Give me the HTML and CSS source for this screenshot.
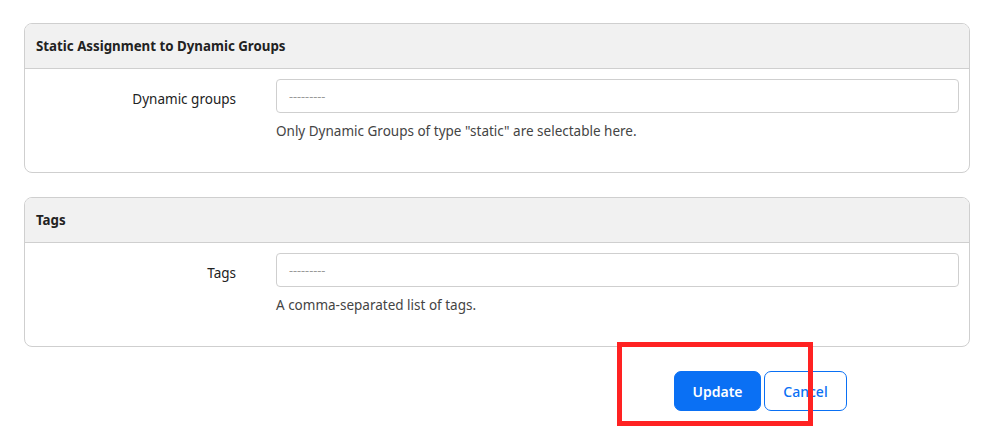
FILE: index.html
```html
<!DOCTYPE html>
<html>
<head>
<meta charset="utf-8">
<link rel="stylesheet" href="styles.css">
</head>
<body>
<div class="page">
  <section class="panel">
    <div class="panel-heading">Static Assignment to Dynamic Groups</div>
    <div class="panel-body">
      <label class="field-label">Dynamic groups</label>
      <div class="field">
        <div class="select"><span class="placeholder">---------</span></div>
        <div class="help">Only Dynamic Groups of type "static" are selectable here.</div>
      </div>
    </div>
  </section>
  <section class="panel">
    <div class="panel-heading">Tags</div>
    <div class="panel-body">
      <label class="field-label">Tags</label>
      <div class="field">
        <div class="select"><span class="placeholder">---------</span></div>
        <div class="help">A comma-separated list of tags.</div>
      </div>
    </div>
  </section>
  <div class="actions">
    <button class="btn btn-primary">Update</button>
    <button class="btn btn-outline">Cancel</button>
  </div>
  <div class="highlight"></div>
</div>
</body>
</html>
```
FILE: styles.css
```css
html, body {
  margin: 0;
  padding: 0;
  background: #fff;
}
body {
  font-family: "Noto Sans", "Open Sans", sans-serif;
  font-size: 13.5px;
  color: #222;
}
.page {
  position: relative;
  box-sizing: border-box;
  min-height: 100vh;
  padding: 23px 30px 0 24px;
}
.panel {
  border: 1px solid #cfcfcf;
  border-radius: 8px;
  margin-bottom: 24px;
  overflow: hidden;
}
.panel-heading {
  height: 45px;
  box-sizing: border-box;
  background: #f1f1f1;
  border-bottom: 1px solid #cfcfcf;
  padding: 0 11px;
  display: flex;
  align-items: center;
  font-size: 13.3px;
  font-weight: 700;
  color: #222;
}
.panel-body {
  display: grid;
  grid-template-columns: 211px 1fr;
  column-gap: 40px;
  padding: 10px 10px 31px 0;
}
.field-label {
  height: 34px;
  box-sizing: border-box;
  padding-top: 5px;
  display: flex;
  align-items: center;
  justify-content: flex-end;
  font-size: 13.5px;
  color: #222;
}
.select {
  height: 34px;
  box-sizing: border-box;
  border: 1px solid #cfcfcf;
  border-radius: 4px;
  display: flex;
  align-items: center;
  padding: 0 12px;
}
.placeholder {
  font-size: 12.5px;
  color: #9a9a9a;
}
.help {
  margin-top: 8px;
  line-height: 20px;
  color: #444;
}
.actions {
  display: flex;
  gap: 3px;
  padding-left: 650px;
}
.btn {
  height: 40px;
  box-sizing: border-box;
  border-radius: 7px;
  font-family: inherit;
  font-size: 14px;
  font-weight: 600;
  padding: 0;
  cursor: pointer;
}
.btn-primary {
  width: 87px;
  background: #0a70f4;
  border: 1px solid #0a70f4;
  color: #fff;
}
.btn-outline {
  width: 83px;
  background: #fff;
  border: 1px solid #0a70f4;
  color: #0a70f4;
  font-weight: 500;
}
.highlight {
  position: absolute;
  left: 617px;
  top: 342px;
  width: 196px;
  height: 84px;
  box-sizing: border-box;
  border: 5px solid #ff2222;
}
```
